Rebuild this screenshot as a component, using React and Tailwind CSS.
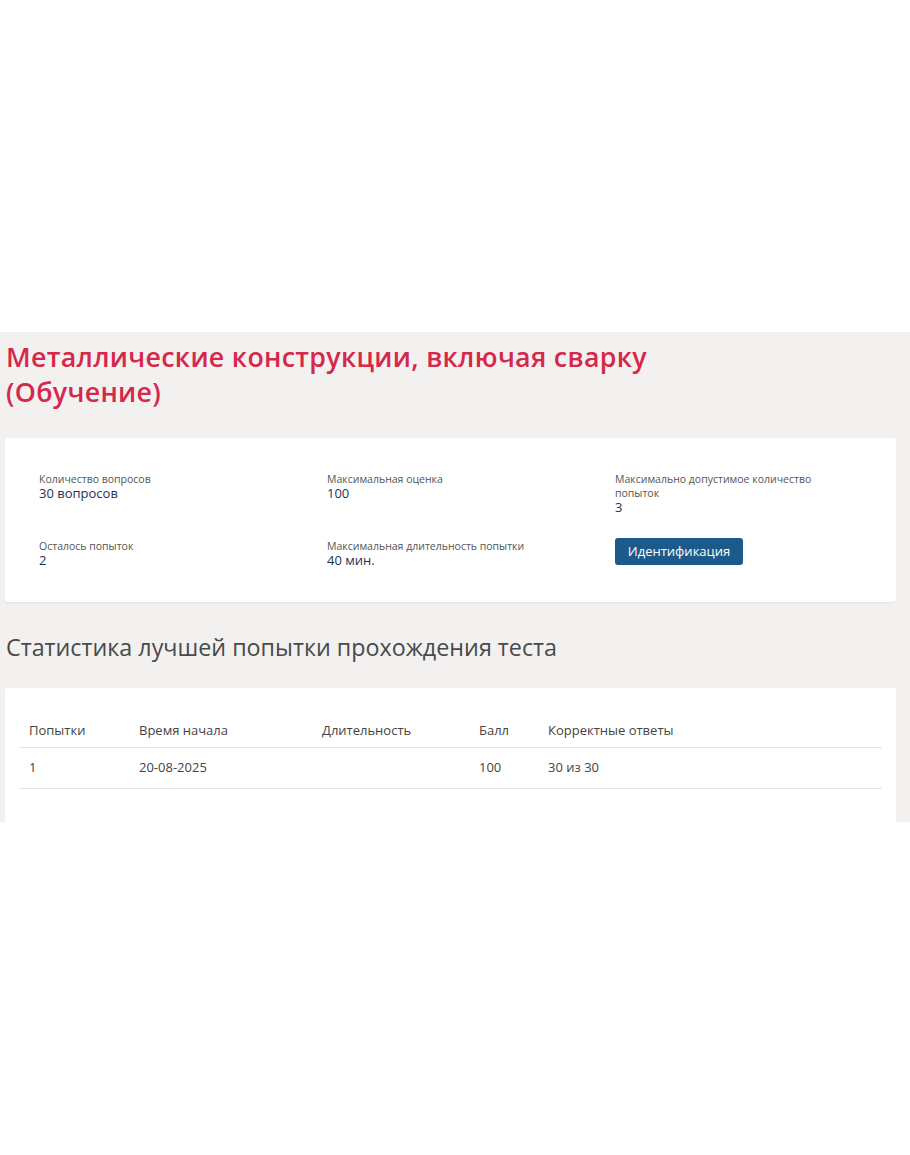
export default function App() {
  return (
    <div className="min-h-[1155px] bg-white font-['Open_Sans',sans-serif]">
      <div className="h-[332px]" />
      <div className="bg-[#f2f1f0] h-[490px] overflow-hidden pl-[5px] pr-[14px]">
        <h1 className="pt-[7px] pl-[1px] text-[26.8px] leading-[35px] font-semibold text-[#d6284b] tracking-[0.3px]">
          Металлические конструкции, включая сварку
          <br />
          (Обучение)
        </h1>

        <div className="mt-[29px] bg-white rounded-[3px] shadow-[0_1px_2px_rgba(0,0,0,0.06)] h-[164px] pl-[34px] pt-[34px]">
          <div className="grid grid-cols-[288px_288px_230px]">
            <div>
              <div className="text-[10.5px] leading-[14px] text-[#555]">Количество вопросов</div>
              <div className="text-[13px] leading-[15px] text-[#1f3350]">30 вопросов</div>
            </div>
            <div>
              <div className="text-[10.5px] leading-[14px] text-[#555]">Максимальная оценка</div>
              <div className="text-[13px] leading-[15px] text-[#1f3350]">100</div>
            </div>
            <div>
              <div className="text-[10.5px] leading-[14px] text-[#555]">Максимально допустимое количество попыток</div>
              <div className="text-[13px] leading-[15px] text-[#1f3350]">3</div>
            </div>
          </div>
          <div className="grid grid-cols-[288px_288px_230px] mt-[22px] items-start">
            <div className="pt-[2px]">
              <div className="text-[10.5px] leading-[14px] text-[#555]">Осталось попыток</div>
              <div className="text-[13px] leading-[14px] text-[#1f3350]">2</div>
            </div>
            <div className="pt-[2px]">
              <div className="text-[10.5px] leading-[14px] text-[#555]">Максимальная длительность попытки</div>
              <div className="text-[13px] leading-[14px] text-[#1f3350]">40 мин.</div>
            </div>
            <div>
              <button className="mt-[1px] w-[128px] h-[27px] rounded-[3px] bg-[#1d5a8c] text-white text-[13px]">
                Идентификация
              </button>
            </div>
          </div>
        </div>

        <h2 className="mt-[29px] pl-[1px] text-[23.3px] leading-[32px] font-normal text-[#4a4a4a]">
          Статистика лучшей попытки прохождения теста
        </h2>

        <div className="mt-[25px] bg-white rounded-[3px] h-[200px] px-[14px] pt-[26px]">
          <table className="w-full text-[13px] text-[#444] border-collapse">
            <thead>
              <tr className="border-b border-[#e4e4e4]">
                <th className="text-left font-normal h-[33px] pl-[10px] w-[120px]">Попытки</th>
                <th className="text-left font-normal w-[183px]">Время начала</th>
                <th className="text-left font-normal w-[157px]">Длительность</th>
                <th className="text-left font-normal w-[69px]">Балл</th>
                <th className="text-left font-normal">Корректные ответы</th>
              </tr>
            </thead>
            <tbody>
              <tr className="border-b border-[#e4e4e4]">
                <td className="h-[41px] pl-[10px]">1</td>
                <td>20-08-2025</td>
                <td></td>
                <td>100</td>
                <td>30 из 30</td>
              </tr>
            </tbody>
          </table>
        </div>
      </div>
    </div>
  );
}
